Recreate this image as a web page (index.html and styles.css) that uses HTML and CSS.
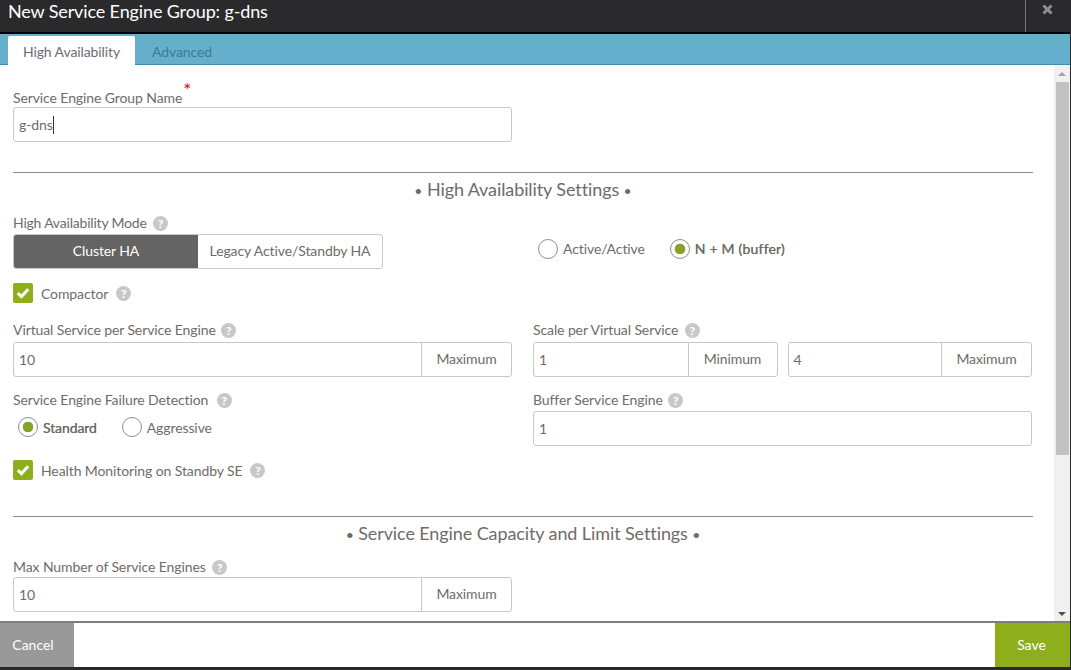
FILE: index.html
```html
<!DOCTYPE html>
<html lang="en">
<head>
    <meta charset="UTF-8">
    <title>New Service Engine Group: g-dns</title>
    <link rel="stylesheet" href="styles.css">
</head>
<body>
<div class="modal">
    <header class="modal-header">
        <h1 class="modal-title">New Service Engine Group: g-dns</h1>
        <button class="close-btn" aria-label="Close">
            <svg width="11" height="11" viewBox="0 0 11 11"><path d="M1.5 1.5l8 8M9.5 1.5l-8 8" stroke="#8f8f91" stroke-width="3"/></svg>
        </button>
    </header>

    <nav class="tabs">
        <a class="tab active">High Availability</a>
        <a class="tab">Advanced</a>
    </nav>

    <div class="body">
        <main class="content">
            <div class="field name-field">
                <label class="label">Service Engine Group Name<span class="req">*</span></label>
                <div class="input"><span class="value">g-dns</span><span class="caret"></span></div>
            </div>

            <h2 class="section first"><span class="bullet">•</span> High Availability Settings <span class="bullet">•</span></h2>

            <div class="label ha-label">High Availability Mode <span class="help">?</span></div>
            <div class="ha-row">
                <div class="segmented">
                    <span class="seg on">Cluster HA</span>
                    <span class="seg">Legacy Active/Standby HA</span>
                </div>
                <div class="radios mode-radios">
                    <span class="radio"><i class="dot"></i>Active/Active</span>
                    <span class="radio checked"><i class="dot"></i>N + M (buffer)</span>
                </div>
            </div>

            <div class="check compactor">
                <span class="box"><svg width="14" height="12" viewBox="0 0 14 12"><path d="M1.8 6.2l3.6 3.4 6.8-7.4" fill="none" stroke="#fff" stroke-width="3"/></svg></span>
                Compactor <span class="help">?</span>
            </div>

            <div class="columns vs-row">
                <div class="col-left">
                    <div class="label">Virtual Service per Service Engine <span class="help tight">?</span></div>
                    <div class="input addon-input"><span class="value">10</span><span class="addon">Maximum</span></div>
                </div>
                <div class="col-right">
                    <div class="label">Scale per Virtual Service <span class="help">?</span></div>
                    <div class="pair">
                        <div class="input addon-input"><span class="value">1</span><span class="addon short">Minimum</span></div>
                        <div class="input addon-input"><span class="value">4</span><span class="addon">Maximum</span></div>
                    </div>
                </div>
            </div>

            <div class="columns failure-row">
                <div class="col-left">
                    <div class="label">Service Engine Failure Detection <span class="help wide">?</span></div>
                    <div class="radios failure-radios">
                        <span class="radio checked"><i class="dot"></i>Standard</span>
                        <span class="radio"><i class="dot"></i>Aggressive</span>
                    </div>
                </div>
                <div class="col-right">
                    <div class="label">Buffer Service Engine <span class="help tight">?</span></div>
                    <div class="input buffer-input"><span class="value">1</span></div>
                </div>
            </div>

            <div class="check health">
                <span class="box"><svg width="14" height="12" viewBox="0 0 14 12"><path d="M1.8 6.2l3.6 3.4 6.8-7.4" fill="none" stroke="#fff" stroke-width="3"/></svg></span>
                Health Monitoring on Standby SE <span class="help">?</span>
            </div>

            <h2 class="section second"><span class="bullet">•</span> Service Engine Capacity and Limit Settings <span class="bullet">•</span></h2>

            <div class="label">Max Number of Service Engines <span class="help">?</span></div>
            <div class="input addon-input max-input"><span class="value">10</span><span class="addon">Maximum</span></div>
        </main>

        <div class="scrollbar">
            <span class="arrow up"></span>
            <span class="thumb"></span>
            <span class="arrow down"></span>
        </div>
    </div>

    <footer class="footer">
        <button class="btn cancel">Cancel</button>
        <button class="btn save">Save</button>
    </footer>
</div>
</body>
</html>
```

FILE: styles.css
```css
* { box-sizing: border-box; }
html, body { margin: 0; height: 100%; }
body {
    font-family: Lato, "Open Sans", sans-serif;
    font-size: 14px;
    letter-spacing: -0.1px;
    color: #716b68;
    background: #2a2a2c;
    overflow: hidden;
}
.modal {
    width: 1070px;
    height: 667px;
    display: flex;
    flex-direction: column;
    background: #fff;
}

/* header */
.modal-header {
    height: 34px;
    flex: none;
    display: flex;
    justify-content: space-between;
    background: #2a2a2c;
    border-bottom: 2px solid #000;
}
.modal-title {
    margin: 0;
    padding-left: 8px;
    font-size: 18px;
    font-weight: 400;
    letter-spacing: -0.13px;
    line-height: 22px;
    color: #fff;
}
.close-btn {
    width: 45px;
    padding: 0 2px 12px 0;
    border: 0;
    border-left: 1px solid #77777a;
    background: none;
}

/* tabs */
.tabs {
    height: 31px;
    flex: none;
    display: flex;
    align-items: flex-end;
    padding-left: 8px;
    background: #65afcd;
    border-bottom: 1px solid #3f8fae;
}
.tab {
    height: 28px;
    padding: 0 15px;
    margin-right: 2px;
    line-height: 32px;
    color: #3f7a94;
}
.tab.active {
    height: 29px;
    width: 127px;
    text-align: center;
    padding: 0;
    margin-bottom: -1px;
    background: #fff;
    color: #6b6b75;
    border-radius: 2px 2px 0 0;
}

/* body */
.body {
    flex: 1;
    min-height: 0;
    display: flex;
}
.content {
    flex: 1;
    min-width: 0;
    padding: 24px 21px 0 13px;
    overflow: hidden;
}
.scrollbar {
    width: 16px;
    flex: none;
    display: flex;
    flex-direction: column;
    align-items: center;
    background: #f0f0f0;
}
.thumb {
    width: 13px;
    height: 373px;
    margin-top: 6px;
    background: #c1c1c1;
}
.arrow {
    width: 0;
    height: 0;
    border-left: 4px solid transparent;
    border-right: 4px solid transparent;
}
.arrow.up { margin-top: 7px; border-bottom: 4px solid #a3a3a3; }
.arrow.down { margin-top: auto; margin-bottom: 5px; border-top: 4px solid #505050; }

/* form bits */
.label {
    line-height: 18px;
    white-space: nowrap;
}
.req {
    position: relative;
    top: -6px;
    margin-left: 1px;
    color: #f00;
    font-size: 19px;
    line-height: 0;
}
.help {
    display: inline-block;
    width: 15px;
    height: 15px;
    margin-left: 3px;
    border-radius: 50%;
    background: #c8c8c8;
    color: #fff;
    font-size: 12px;
    font-weight: 900;
    line-height: 15px;
    text-align: center;
}
.help.tight { margin-left: 2px; }
.help.wide { margin-left: 5px; }
.input {
    display: flex;
    align-items: center;
    height: 35px;
    border: 1px solid #c8c8c8;
    border-radius: 3px;
    background: #fff;
}
.value { padding: 0 0 1px 5px; }
.caret {
    width: 1px;
    height: 18px;
    background: #333;
}
.name-field .input { width: 499px; }
.addon {
    width: 90px;
    height: 100%;
    margin-left: auto;
    border-left: 1px solid #c8c8c8;
    line-height: 32px;
    text-align: center;
}
.addon.short { width: 89px; }
.section {
    margin: 0;
    border-top: 1px solid #8c8c8c;
    font-size: 18px;
    font-weight: 400;
    line-height: 32px;
    text-align: center;
}
.bullet { font-size: 14px; }
.section.first { margin-top: 30px; height: 34px; }
.ha-label { margin-top: 8px; letter-spacing: -0.2px; }
.ha-row {
    display: flex;
    align-items: center;
    margin-top: 2px;
}
.segmented {
    display: flex;
    width: 370px;
    height: 35px;
    border: 1px solid #c8c8c8;
    border-radius: 3px;
    line-height: 32px;
    text-align: center;
}
.seg { flex: 1; white-space: nowrap; }
.seg.on {
    flex: none;
    width: 184px;
    background: #646464;
    color: #fff;
    border-radius: 2px 0 0 2px;
}
.radios { display: flex; align-items: center; }
.radio {
    display: flex;
    align-items: center;
    gap: 5px;
}
.dot {
    width: 20px;
    height: 20px;
    border: 1px solid #8d8d8d;
    border-radius: 50%;
    background: #fff;
}
.radio.checked .dot {
    border-color: #8d8d8d;
    background: radial-gradient(circle, #88a428 0 5px, #fff 5.6px);
}
.radio.checked { text-shadow: 0 0 0 #716b68; }
.mode-radios { gap: 25px; margin: -6px 0 0 155px; }
.mode-radios .checked { letter-spacing: 0.2px; }
.failure-radios { gap: 25px; margin: 7px 0 0 5px; height: 22px; }
.check {
    display: flex;
    align-items: center;
    gap: 8px;
    white-space: nowrap;
}
.box {
    display: flex;
    align-items: center;
    justify-content: center;
    width: 20px;
    height: 20px;
    border-radius: 2px;
    background: #8fae1b;
}
.check .help { margin-left: 0; }
.compactor { margin-top: 14px; }
.columns { display: flex; }
.col-left { width: 499px; margin-right: 21px; }
.col-right { width: 499px; }
.vs-row { margin-top: 18px; }
.vs-row .input { margin-top: 3px; }
.pair { display: flex; gap: 10px; }
.pair .input { flex: 1; }
.failure-row { margin-top: 14px; }
.buffer-input { margin-top: 2px; }
.health { margin-top: 14px; }
.section.second { margin-top: 36px; height: 42px; }
.max-input { width: 499px; margin-top: 1px; }

/* footer */
.footer {
    height: 46px;
    flex: none;
    display: flex;
    justify-content: space-between;
    border-top: 2px solid #7d7d7d;
}
.btn {
    width: 74px;
    border: 0;
    color: #fff;
    font: 14px Lato, sans-serif;
    padding-bottom: 3px;
}
.cancel { background: #999; padding-right: 8px; padding-left: 0; }
.save { width: 75px; background: #8fae1b; padding-left: 0; padding-right: 2px; }
```
